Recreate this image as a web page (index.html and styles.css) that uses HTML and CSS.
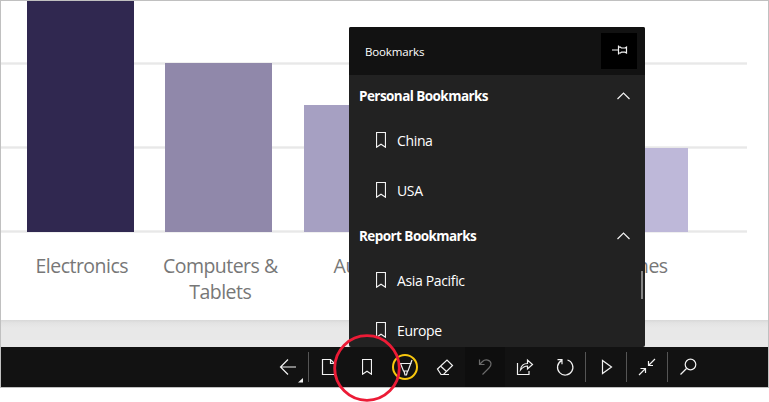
FILE: index.html
```html
<!DOCTYPE html>
<html lang="en">
<head>
<meta charset="utf-8">
<title>Bookmarks</title>
<link rel="stylesheet" href="styles.css">
</head>
<body>
<svg class="defs" width="0" height="0" aria-hidden="true">
  <symbol id="bookmark" viewBox="0 0 10 16"><path d="M.5.5h9v14.700L5 12.300.5 15.200z"/></symbol>
  <symbol id="chevron" viewBox="0 0 13 8"><path d="M.5 7l6-6 6 6"/></symbol>
</svg>
<div class="frame">
  <main class="report">
    <div class="plot">
      <div class="bar bar-1"></div>
      <div class="bar bar-2"></div>
      <div class="bar bar-3"></div>
      <div class="bar bar-4"></div>
      <div class="bar bar-5"></div>
    </div>
    <div class="labels">
      <span>Electronics</span>
      <span>Computers &amp;<br>Tablets</span>
      <span>Audio</span>
      <span>Phones</span>
      <span class="last">Games</span>
    </div>
  </main>
  <div class="gutter"></div>
  <nav class="toolbar">
    <button class="tool"><svg width="40" height="40"><path d="M12.500 20H28M20 12.500L12.500 20l7.500 7.500"/><path class="solid" d="M35 31v4.500h-5z"/></svg></button>
    <hr>
    <button class="tool page"><svg width="38" height="40"><path d="M13.500 12.500h8l4 4v11h-12zM21.500 12.500v4h4"/></svg></button>
    <button class="tool"><svg width="10" height="16"><use href="#bookmark"/></svg></button>
    <button class="tool pen"><svg width="38" height="40"><circle class="ring" cx="18" cy="20" r="12"/><path d="M12.500 16.500h12M13.500 16.500l3 7.500h4.500l4-11M17 24l1 4h1.500l1-4"/></svg></button>
    <button class="tool"><svg width="40" height="40"><path d="M12.500 22L22 13l5.500 5.500-9 9H16zM15.500 19l6 5.500M16 27.500h8"/></svg></button>
    <button class="tool disabled"><svg width="40" height="40"><path d="M14.500 12.500v5h5M14.500 17.500l3-3c3-3 8-1.500 8.500 2 .2 2-1 3.500-2 4.500L17.500 27.500"/></svg></button>
    <button class="tool"><svg width="40" height="40"><path d="M12.500 16v11.500h11.500V24M15.500 23c.5-4 3-6.500 7-6.500V13l5 4.500-5 4.500v-3c-3 0-5 1.500-7 4z"/></svg></button>
    <button class="tool"><svg width="40" height="40"><path d="M22.500 13a7.700 7.700 0 1 1-6 .600M12.500 12.700h4.500v4.500"/></svg></button>
    <hr>
    <button class="tool"><svg width="40" height="40"><path d="M16.500 13.500v13l9-6.500z"/></svg></button>
    <hr>
    <button class="tool"><svg width="40" height="40"><path d="M28 12l-6 6M21.500 14v4.500H26M12 28l6-6M13.500 21.500H18.500V26"/></svg></button>
    <hr>
    <button class="tool"><svg width="40" height="40"><circle cx="22.500" cy="17.500" r="5.300"/><path d="M18.500 21.500L12.500 27.500"/></svg></button>
  </nav>
</div>
<aside class="panel">
  <header class="panel-head">
    <span class="title">Bookmarks</span>
    <button class="pin"><svg width="36" height="36"><path d="M11 17h6M17.500 12.500v9M17.500 14.500l1.500-.5 1.500 1h3.500l1.500-1v6l-1.500-.8h-3.500l-1.500 1-1.500-.5"/></svg></button>
  </header>
  <section>
    <h2><span>Personal Bookmarks</span><svg width="13" height="8"><use href="#chevron"/></svg></h2>
    <div class="item"><svg width="10" height="16"><use href="#bookmark"/></svg><span>China</span></div>
    <div class="item"><svg width="10" height="16"><use href="#bookmark"/></svg><span>USA</span></div>
  </section>
  <section>
    <h2><span>Report Bookmarks</span><svg width="13" height="8"><use href="#chevron"/></svg></h2>
    <div class="item"><svg width="10" height="16"><use href="#bookmark"/></svg><span>Asia Pacific</span></div>
    <div class="item"><svg width="10" height="16"><use href="#bookmark"/></svg><span>Europe</span></div>
  </section>
  <div class="scroll"></div>
</aside>
<svg class="callout" width="70" height="70"><circle cx="35" cy="35" r="32.300"/></svg>
</body>
</html>
```
FILE: styles.css
```css
* { box-sizing: border-box; }
body { margin: 0; width: 769px; height: 402px; position: relative; overflow: hidden; background: #fff; font-family: "Open Sans", "Noto Sans", sans-serif; }
.defs { position: absolute; }
svg { display: block; fill: none; stroke: #f2f2f2; stroke-width: 1.2; flex: none; }
.frame { height: 388px; border: 1px solid #c0c0c0; overflow: hidden; }
.report { height: 319px; background: #fff; }
.plot {
  width: 746px; height: 232px; padding: 0 0 1px 26px;
  display: flex; align-items: flex-end; gap: 31.500px;
  background:
    linear-gradient(#f4f4f4, #e8e8e8 40% 60%, #f4f4f4) 0 61px / 100% 3px no-repeat,
    linear-gradient(#f4f4f4, #e8e8e8 40% 60%, #f4f4f4) 0 145px / 100% 3px no-repeat,
    linear-gradient(#f4f4f4, #e8e8e8 40% 60%, #f4f4f4) 0 229px / 100% 3px no-repeat;
}
.bar { width: 107px; flex: none; }
.bar-1 { height: 231px; background: #302850; }
.bar-2 { height: 169px; margin-left: -.5px; margin-right: .5px; background: #9088aa; }
.bar-3 { height: 127px; background: #a6a0c2; }
.bar-4 { height: 100px; background: #b2abcd; }
.bar-5 { height: 84px; background: #beb8d9; }
.labels { display: flex; padding: 20px 0 0 11.500px; color: #777; font-size: 19.500px; line-height: 26px; text-align: center; letter-spacing: -.52px; }
.labels span { width: 138.500px; white-space: nowrap; }
.labels .last { padding-left: 3px; }
.gutter { height: 27px; background: linear-gradient(#d8d8d8, #e3e3e3 3px, #e8e8e8 8px); }
.toolbar { height: 40px; display: flex; align-items: center; padding-left: 267px; background: #121212; }
.toolbar hr { width: 1px; height: 30px; margin: 0; border: 0; background: #555; flex: none; }
button { border: 0; padding: 0; background: none; display: flex; align-items: center; justify-content: center; }
.tool { width: 40px; height: 40px; flex: none; }
.tool.page, .tool.pen { width: 38px; }
.tool .solid { fill: #f2f2f2; stroke: none; }
.tool .ring { stroke: #f8c80e; stroke-width: 2; }
.disabled { background: #0e0e0e; }
.disabled svg { stroke: #6b6b6b; }
.panel { position: absolute; left: 349px; top: 27px; width: 296px; height: 320px; background: #222; color: #fff; overflow: hidden; border-radius: 2px; }
.panel-head { height: 48px; padding: 0 8px 0 16px; display: flex; align-items: center; justify-content: space-between; background: #121212; }
.title { font-size: 11.500px; letter-spacing: -.15px; }
.pin { width: 36px; height: 36px; background: #000; }
.panel h2 { margin: 0; height: 40px; padding: 2px 15px 0 10px; display: flex; align-items: center; justify-content: space-between; font-size: 13.500px; font-weight: 700; letter-spacing: -.56px; }
.item { height: 50px; display: flex; align-items: center; gap: 11px; padding-left: 27px; font-size: 14px; letter-spacing: -.35px; }
.item span { padding-top: 1px; }
.scroll { position: absolute; right: 2px; top: 244px; width: 2px; height: 28px; background: #858585; }
.callout { position: absolute; left: 332px; top: 333px; stroke: #ec1b36; stroke-width: 2.800; }
```
